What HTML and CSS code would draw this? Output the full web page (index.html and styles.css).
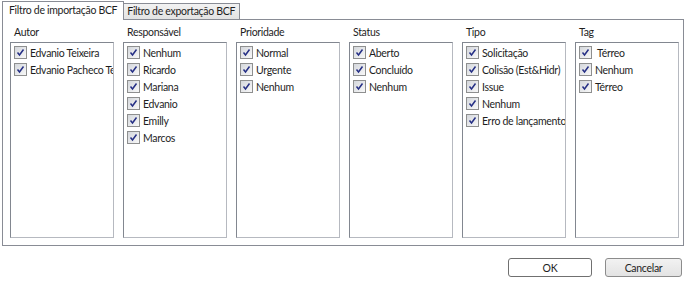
FILE: index.html
```html
<!DOCTYPE html>
<html lang="pt">
<head>
  <meta charset="UTF-8" />
  <title>Filtro BCF</title>
  <link rel="stylesheet" href="styles.css">
</head>
<body>
  <div class="tabs">
    <div class="tab active">Filtro de importação BCF</div>
    <div class="tab">Filtro de exportação BCF</div>
  </div>

  <div class="panel">
    <div class="col">
      <div class="label">Autor</div>
      <div class="list">
        <label class="item"><span class="cb"></span>Edvanio Teixeira</label>
        <label class="item"><span class="cb"></span>Edvanio Pacheco Teixeira</label>
      </div>
    </div>
    <div class="col">
      <div class="label">Responsável</div>
      <div class="list">
        <label class="item"><span class="cb"></span>Nenhum</label>
        <label class="item"><span class="cb"></span>Ricardo</label>
        <label class="item"><span class="cb"></span>Mariana</label>
        <label class="item"><span class="cb"></span>Edvanio</label>
        <label class="item"><span class="cb"></span>Emilly</label>
        <label class="item"><span class="cb"></span>Marcos</label>
      </div>
    </div>
    <div class="col">
      <div class="label">Prioridade</div>
      <div class="list">
        <label class="item"><span class="cb"></span>Normal</label>
        <label class="item"><span class="cb"></span>Urgente</label>
        <label class="item"><span class="cb"></span>Nenhum</label>
      </div>
    </div>
    <div class="col">
      <div class="label">Status</div>
      <div class="list">
        <label class="item"><span class="cb"></span>Aberto</label>
        <label class="item"><span class="cb"></span>Concluído</label>
        <label class="item"><span class="cb"></span>Nenhum</label>
      </div>
    </div>
    <div class="col">
      <div class="label">Tipo</div>
      <div class="list">
        <label class="item"><span class="cb"></span>Solicitação</label>
        <label class="item"><span class="cb"></span>Colisão (Est&amp;Hidr)</label>
        <label class="item"><span class="cb"></span>Issue</label>
        <label class="item"><span class="cb"></span>Nenhum</label>
        <label class="item"><span class="cb"></span>Erro de lançamento</label>
      </div>
    </div>
    <div class="col">
      <div class="label">Tag</div>
      <div class="list">
        <label class="item"><span class="cb"></span>&nbsp;Térreo</label>
        <label class="item"><span class="cb"></span>Nenhum</label>
        <label class="item"><span class="cb"></span>Térreo</label>
      </div>
    </div>
  </div>

  <div class="buttons">
    <button class="btn ok">OK</button>
    <button class="btn cancel">Cancelar</button>
  </div>
</body>
</html>
```

FILE: styles.css
```css
body {
  margin: 0;
  background: #fff;
  font-family: Lato, "Noto Sans", sans-serif;
  font-size: 10.5px;
  letter-spacing: -0.3px;
  color: #1e1e1e;
  width: 688px;
  height: 281px;
  overflow: hidden;
}
.tabs {
  display: flex;
  align-items: flex-end;
  height: 20px;
  margin-left: 2px;
  padding-top: 2px;
  box-sizing: border-box;
  position: relative;
  z-index: 1;
}
.tab {
  height: 15px;
  line-height: 14px;
  padding: 0 4px 0 3px;
  border: 1px solid #898c95;
  border-bottom: none;
  background: linear-gradient(#f2f2f2, #e3e3e3);
  white-space: nowrap;
}
.tab + .tab {
  border-left: none;
  margin-bottom: 1px;
}
.tab.active {
  height: 18px;
  line-height: 17px;
  padding: 0 6px;
  background: #fff;
}
.panel {
  display: flex;
  gap: 9px;
  margin: -1px 4px 0 2px;
  width: 682px;
  height: 227px;
  box-sizing: border-box;
  border: 1px solid #898c95;
  padding: 5px 0 0 7px;
}
.col {
  width: 104px;
  display: flex;
  flex-direction: column;
}
.label {
  height: 17px;
  line-height: 14px;
  padding-left: 4px;
}
.list {
  height: 196px;
  box-sizing: border-box;
  border: 1px solid #828790;
  border-right-color: #b6b9c0;
  border-bottom-color: #b6b9c0;
  padding: 1px 0 0 3px;
  overflow: hidden;
}
.item {
  display: flex;
  align-items: center;
  height: 17px;
  white-space: nowrap;
}
.cb {
  flex: none;
  width: 11px;
  height: 11px;
  margin-right: 3px;
  border: 1px solid #8e8f8f;
  background:
    url("data:image/svg+xml,%3Csvg xmlns='http://www.w3.org/2000/svg' width='11' height='11'%3E%3Cpath d='M2.5 5.5 L4.5 8 L8.5 2.5' fill='none' stroke='%23252f85' stroke-width='1.5'/%3E%3C/svg%3E") center no-repeat,
    linear-gradient(135deg, #d4d7dc, #f8f8f8);
}
.buttons {
  display: flex;
  justify-content: flex-end;
  gap: 13px;
  margin: 12px 6px 0 0;
}
.btn {
  height: 19px;
  padding: 0;
  font-family: inherit;
  font-size: 10.5px;
  letter-spacing: -0.3px;
  color: #1e1e1e;
  border: 1px solid #707070;
  border-radius: 3px;
  background: #fff;
}
.ok {
  width: 84px;
}
.cancel {
  width: 77px;
  border-color: #8c8c8c;
  background: linear-gradient(#f2f2f2, #e3e3e3);
}
```
